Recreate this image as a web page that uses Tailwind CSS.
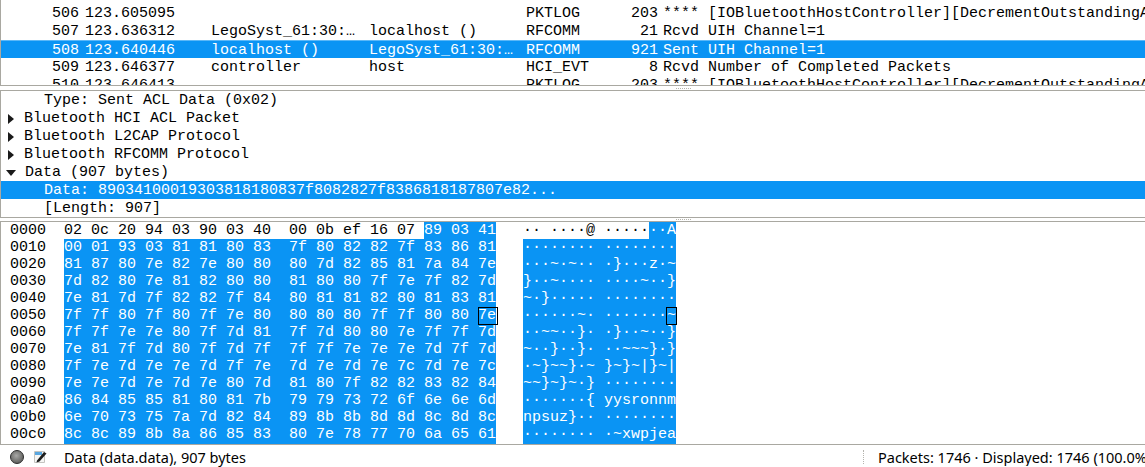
<!DOCTYPE html>
<html lang="en">
<head>
  <meta charset="UTF-8" />
  <title>Wireshark packet view</title>
  <script src="https://cdn.jsdelivr.net/npm/@tailwindcss/browser@4"></script>
</head>
<body class="bg-white text-black overflow-hidden">
  <div class="w-[1145px] h-[467px] flex flex-col overflow-hidden font-['Liberation_Mono',monospace] text-[15px] leading-[18px] whitespace-pre">

    <!-- packet list -->
    <div class="h-[86px] shrink-0 flex flex-col border-l border-b border-[#a9a8a1] pt-[4px] overflow-hidden">
      <div class="flex h-[18px] pt-px shrink-0">
        <span class="w-[78px] shrink-0 text-right">506</span><span class="w-[132px] shrink-0 pl-[6px]">123.605095</span><span class="w-[158px] shrink-0"></span><span class="w-[157px] shrink-0"></span><span class="w-[56px] shrink-0">PKTLOG</span><span class="w-[76px] shrink-0 text-right">203</span><span class="pl-[5px] shrink-0">**** [IOBluetoothHostController][DecrementOutstandingACL</span>
      </div>
      <div class="flex h-[18px] pt-px shrink-0">
        <span class="w-[78px] shrink-0 text-right">507</span><span class="w-[132px] shrink-0 pl-[6px]">123.636312</span><span class="w-[158px] shrink-0">LegoSyst_61:30:…</span><span class="w-[157px] shrink-0">localhost ()</span><span class="w-[56px] shrink-0">RFCOMM</span><span class="w-[76px] shrink-0 text-right">21</span><span class="pl-[5px] shrink-0">Rcvd UIH Channel=1</span>
      </div>
      <div class="flex h-[18px] pt-px shrink-0 bg-[#0a94f4] border-t border-[#5bb8f8] text-white -ml-px pl-px">
        <span class="w-[78px] shrink-0 text-right">508</span><span class="w-[132px] shrink-0 pl-[6px]">123.640446</span><span class="w-[158px] shrink-0">localhost ()</span><span class="w-[157px] shrink-0">LegoSyst_61:30:…</span><span class="w-[56px] shrink-0">RFCOMM</span><span class="w-[76px] shrink-0 text-right">921</span><span class="pl-[5px] shrink-0">Sent UIH Channel=1</span>
      </div>
      <div class="flex h-[18px] pt-px shrink-0">
        <span class="w-[78px] shrink-0 text-right">509</span><span class="w-[132px] shrink-0 pl-[6px]">123.646377</span><span class="w-[158px] shrink-0">controller</span><span class="w-[157px] shrink-0">host</span><span class="w-[56px] shrink-0">HCI_EVT</span><span class="w-[76px] shrink-0 text-right">8</span><span class="pl-[5px] shrink-0">Rcvd Number of Completed Packets</span>
      </div>
      <div class="flex h-[18px] pt-px shrink-0">
        <span class="w-[78px] shrink-0 text-right">510</span><span class="w-[132px] shrink-0 pl-[6px]">123.646413</span><span class="w-[158px] shrink-0"></span><span class="w-[157px] shrink-0"></span><span class="w-[56px] shrink-0">PKTLOG</span><span class="w-[76px] shrink-0 text-right">203</span><span class="pl-[5px] shrink-0">**** [IOBluetoothHostController][DecrementOutstandingACL</span>
      </div>
    </div>

    <!-- splitter -->
    <div class="h-[4px] shrink-0 flex justify-end pr-[454px] items-center">
      <div class="w-[15px] h-px border-t border-dotted border-[#b5b4ae]"></div>
    </div>

    <!-- packet details -->
    <div class="h-[128px] shrink-0 flex flex-col border-l border-t border-b border-[#a9a8a1]">
      <div class="h-[18px] pt-px shrink-0 pl-[43px]">Type: Sent ACL Data (0x02)</div>
      <div class="h-[18px] pt-[2px] shrink-0 flex items-center"><svg class="ml-[7px] mr-[10px]" width="6" height="10" viewBox="0 0 6 10"><path d="M0 0 L6 5 L0 10 Z" fill="#1a1a1a"/></svg>Bluetooth HCI ACL Packet</div>
      <div class="h-[18px] pt-[2px] shrink-0 flex items-center"><svg class="ml-[7px] mr-[10px]" width="6" height="10" viewBox="0 0 6 10"><path d="M0 0 L6 5 L0 10 Z" fill="#1a1a1a"/></svg>Bluetooth L2CAP Protocol</div>
      <div class="h-[18px] pt-[2px] shrink-0 flex items-center"><svg class="ml-[7px] mr-[10px]" width="6" height="10" viewBox="0 0 6 10"><path d="M0 0 L6 5 L0 10 Z" fill="#1a1a1a"/></svg>Bluetooth RFCOMM Protocol</div>
      <div class="h-[18px] pt-[2px] shrink-0 flex items-center"><svg class="ml-[5px] mr-[9px]" width="10" height="6" viewBox="0 0 10 6"><path d="M0 0 L10 0 L5 6 Z" fill="#1a1a1a"/></svg>Data (907 bytes)</div>
      <div class="h-[18px] pt-px shrink-0 pl-[43px] bg-[#0a94f4] text-white">Data: 89034100019303818180837f8082827f8386818187807e82...</div>
      <div class="h-[18px] pt-px shrink-0 pl-[43px]">[Length: 907]</div>
    </div>

    <!-- splitter -->
    <div class="h-[3px] shrink-0 flex justify-end pr-[454px] items-center">
      <div class="w-[15px] h-px border-t border-dotted border-[#b5b4ae]"></div>
    </div>

    <!-- hex dump -->
    <div class="h-[224px] shrink-0 flex flex-col border-l border-t border-b border-[#a9a8a1] overflow-hidden leading-[17px]">
      <div class="flex h-[17px] shrink-0"><span class="w-[63px] shrink-0 pl-[9px]">0000</span><span class="w-[459px] shrink-0">02 0c 20 94 03 90 03 40  00 0b ef 16 07 <span class="bg-[#0a94f4] text-white">89 03 41</span></span><span>·· ····@ ·····<span class="bg-[#0a94f4] text-white">··A</span></span></div>
      <div class="flex h-[17px] shrink-0"><span class="w-[63px] shrink-0 pl-[9px]">0010</span><span class="w-[459px] shrink-0"><span class="bg-[#0a94f4] text-white">00 01 93 03 81 81 80 83  7f 80 82 82 7f 83 86 81</span></span><span class="bg-[#0a94f4] text-white">········ ········</span></div>
      <div class="flex h-[17px] shrink-0"><span class="w-[63px] shrink-0 pl-[9px]">0020</span><span class="w-[459px] shrink-0"><span class="bg-[#0a94f4] text-white">81 87 80 7e 82 7e 80 80  80 7d 82 85 81 7a 84 7e</span></span><span class="bg-[#0a94f4] text-white">···~·~·· ·}···z·~</span></div>
      <div class="flex h-[17px] shrink-0"><span class="w-[63px] shrink-0 pl-[9px]">0030</span><span class="w-[459px] shrink-0"><span class="bg-[#0a94f4] text-white">7d 82 80 7e 81 82 80 80  81 80 80 7f 7e 7f 82 7d</span></span><span class="bg-[#0a94f4] text-white">}··~···· ····~··}</span></div>
      <div class="flex h-[17px] shrink-0"><span class="w-[63px] shrink-0 pl-[9px]">0040</span><span class="w-[459px] shrink-0"><span class="bg-[#0a94f4] text-white">7e 81 7d 7f 82 82 7f 84  80 81 81 82 80 81 83 81</span></span><span class="bg-[#0a94f4] text-white">~·}····· ········</span></div>
      <div class="flex h-[17px] shrink-0"><span class="w-[63px] shrink-0 pl-[9px]">0050</span><span class="w-[459px] shrink-0 relative"><span class="bg-[#0a94f4] text-white">7f 7f 80 7f 80 7f 7e 80  80 80 80 7f 7f 80 80 7e</span><span class="absolute left-[414px] top-0 w-[20px] h-[18px] border border-black"></span></span><span class="relative bg-[#0a94f4] text-white">······~· ·······~<span class="absolute right-[-1px] top-0 w-[11px] h-[18px] border border-black"></span></span></div>
      <div class="flex h-[17px] shrink-0"><span class="w-[63px] shrink-0 pl-[9px]">0060</span><span class="w-[459px] shrink-0"><span class="bg-[#0a94f4] text-white">7f 7f 7e 7e 80 7f 7d 81  7f 7d 80 80 7e 7f 7f 7d</span></span><span class="bg-[#0a94f4] text-white">··~~··}· ·}··~··}</span></div>
      <div class="flex h-[17px] shrink-0"><span class="w-[63px] shrink-0 pl-[9px]">0070</span><span class="w-[459px] shrink-0"><span class="bg-[#0a94f4] text-white">7e 81 7f 7d 80 7f 7d 7f  7f 7f 7e 7e 7e 7d 7f 7d</span></span><span class="bg-[#0a94f4] text-white">~··}··}· ··~~~}·}</span></div>
      <div class="flex h-[17px] shrink-0"><span class="w-[63px] shrink-0 pl-[9px]">0080</span><span class="w-[459px] shrink-0"><span class="bg-[#0a94f4] text-white">7f 7e 7d 7e 7e 7d 7f 7e  7d 7e 7d 7e 7c 7d 7e 7c</span></span><span class="bg-[#0a94f4] text-white">·~}~~}·~ }~}~|}~|</span></div>
      <div class="flex h-[17px] shrink-0"><span class="w-[63px] shrink-0 pl-[9px]">0090</span><span class="w-[459px] shrink-0"><span class="bg-[#0a94f4] text-white">7e 7e 7d 7e 7d 7e 80 7d  81 80 7f 82 82 83 82 84</span></span><span class="bg-[#0a94f4] text-white">~~}~}~·} ········</span></div>
      <div class="flex h-[17px] shrink-0"><span class="w-[63px] shrink-0 pl-[9px]">00a0</span><span class="w-[459px] shrink-0"><span class="bg-[#0a94f4] text-white">86 84 85 85 81 80 81 7b  79 79 73 72 6f 6e 6e 6d</span></span><span class="bg-[#0a94f4] text-white">·······{ yysronnm</span></div>
      <div class="flex h-[17px] shrink-0"><span class="w-[63px] shrink-0 pl-[9px]">00b0</span><span class="w-[459px] shrink-0"><span class="bg-[#0a94f4] text-white">6e 70 73 75 7a 7d 82 84  89 8b 8b 8d 8d 8c 8d 8c</span></span><span class="bg-[#0a94f4] text-white">npsuz}·· ········</span></div>
      <div class="flex h-[18px] shrink-0"><span class="w-[63px] shrink-0 pl-[9px]">00c0</span><span class="w-[459px] shrink-0"><span class="inline-block h-[18px] bg-[#0a94f4] text-white">8c 8c 89 8b 8a 86 85 83  80 7e 78 77 70 6a 65 61</span></span><span class="bg-[#0a94f4] text-white">········ ·~xwpjea</span></div>
    </div>

    <!-- status bar -->
    <div class="flex-1 flex items-center pt-px font-['Noto_Sans',sans-serif] text-[14.5px]">
      <svg class="ml-[10px]" width="14" height="14" viewBox="0 0 14 14"><defs><radialGradient id="ball" cx="0.45" cy="0.4" r="0.6"><stop offset="0" stop-color="#a8a8a6"/><stop offset="1" stop-color="#5e5e5c"/></radialGradient></defs><circle cx="7" cy="7" r="6.5" fill="url(#ball)" stroke="#2e2e2e"/></svg>
      <svg class="ml-[9px]" width="14" height="14" viewBox="0 0 14 14"><path d="M1.500 1.500h10v11h-10z" fill="#f6f6f4" stroke="#c4c4c0"/><path d="M2 2h7v3H2z" fill="#5aa7e0"/><path d="M4 10.500l7-8.500 2.500 1.500-7 8-3 1z" fill="#1c1c1c"/></svg>
      <span class="ml-[17px]">Data (data.data), 907 bytes</span>
      <div class="ml-auto h-[14px] border-l border-dotted border-[#b5b4ae] mr-[14px]"></div>
      <span class="w-[267px] shrink-0 overflow-hidden">Packets: 1746 · Displayed: 1746 (100.0%)</span>
    </div>
  </div>
</body>
</html>
